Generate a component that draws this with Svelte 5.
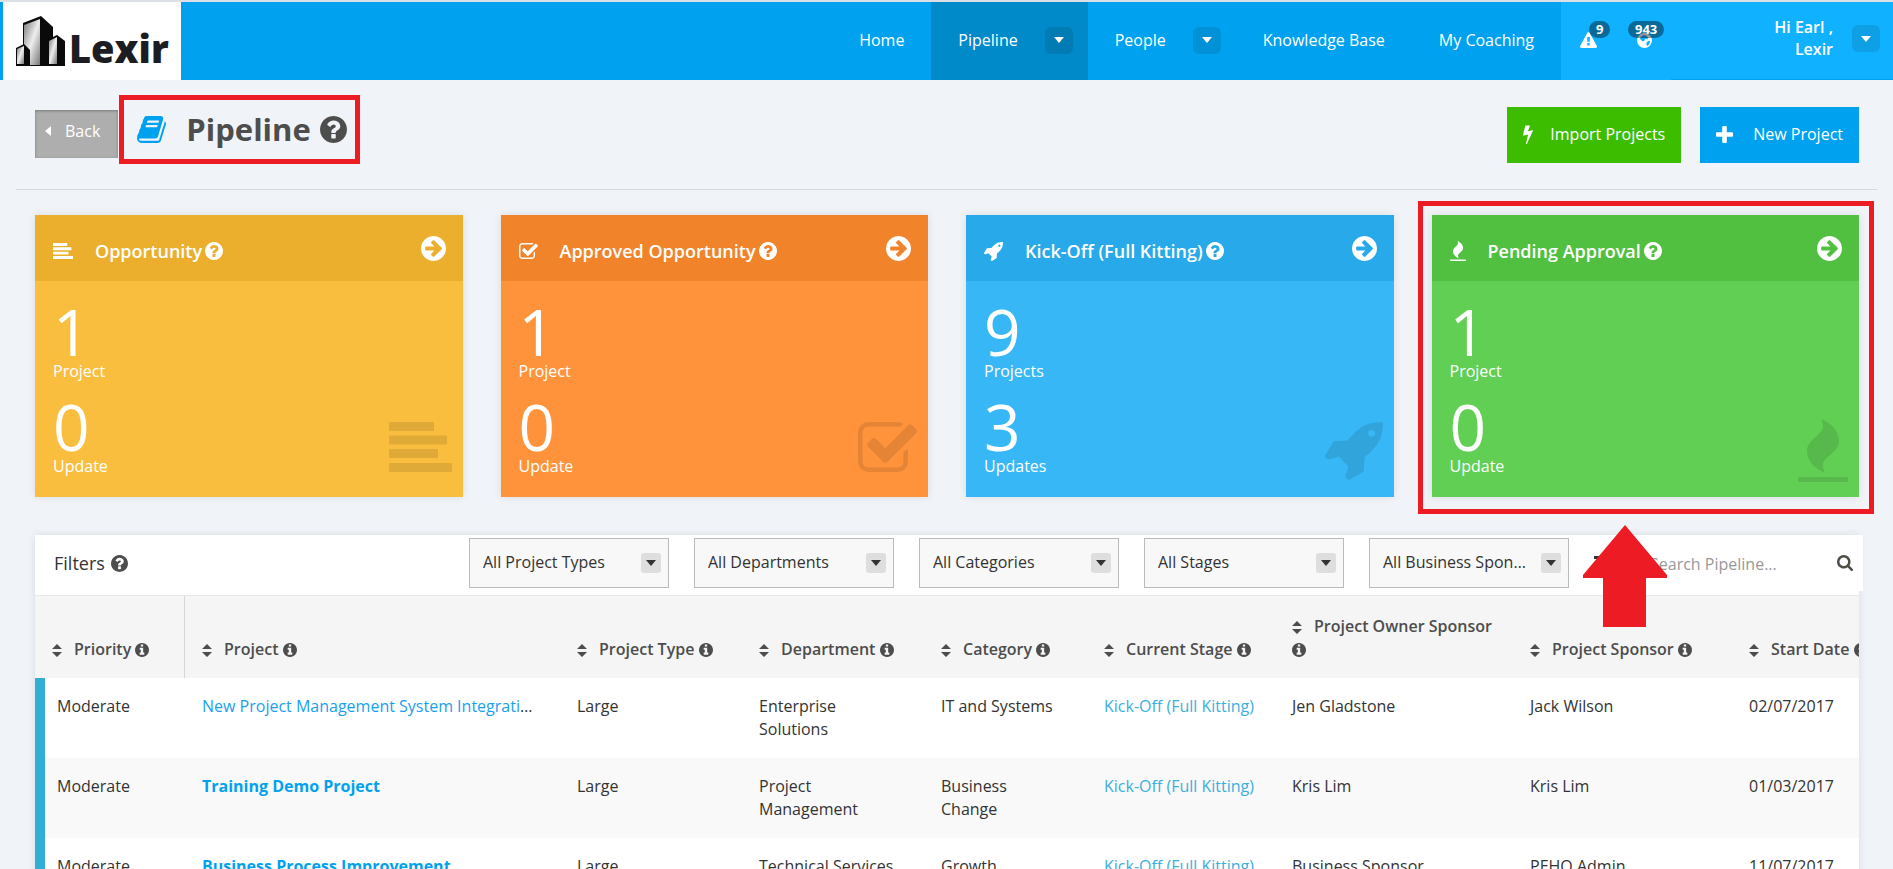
<script>
  const icons = {
    book: { w: 1664, h: 1536, box: '64 128 1664 1536', d: 'M1703 478q40 57 18 129l-275 906q-19 64-76.5 107.5t-122.5 43.5h-923q-77 0-148.5-53.5t-99.5-131.5q-24-67-2-127 0-4 3-27t4-37q1-8-3-21.5t-3-19.5q2-11 8-21t16.5-23.5 16.5-23.5q23-38 45-91.5t30-91.5q3-10 .5-30t-.5-28q3-11 17-28t17-23q21-36 42-92t25-90q1-9-2.5-32t.5-28q4-13 22-30.5t22-22.5q19-26 42.5-84.5t27.5-96.5q1-8-3-25.5t-2-26.5q2-8 9-18t18-23 17-21q8-12 16.5-30.5t15-35 16-36 19.5-32 26.5-23.5 36-11.5 47.5 5.5l-1 3q38-9 51-9h761q74 0 114 56t18 130l-274 906q-36 119-71.5 153.5t-128.5 34.5h-869q-27 0-38 15-11 16-1 43 24 70 144 70h923q29 0 56-15.5t35-41.5l300-987q7-22 5-57 38 15 59 43zm-1064 2q-4 13 2 22.5t20 9.5h608q13 0 25.5-9.5t16.5-22.5l21-64q4-13-2-22.5t-20-9.5h-608q-13 0-25.5 9.5t-16.5 22.5zm-83 256q-4 13 2 22.5t20 9.5h608q13 0 25.5-9.5t16.5-22.5l21-64q4-13-2-22.5t-20-9.5h-608q-13 0-25.5 9.5t-16.5 22.5z' },
    help: { w: 1536, h: 1536, box: '128 128 1536 1536', d: 'M1024 1376v-192q0-14-9-23t-23-9h-192q-14 0-23 9t-9 23v192q0 14 9 23t23 9h192q14 0 23-9t9-23zm256-672q0-88-55.5-163t-138.5-116-170-41q-243 0-371 213-15 24 8 42l132 100q7 6 19 6 16 0 25-12 53-68 86-92 34-24 86-24 48 0 85.5 26t37.5 59q0 38-20 61t-68 45q-63 28-115.5 86.5t-52.5 125.5v36q0 14 9 23t23 9h192q14 0 23-9t9-23q0-19 21.5-49.5t54.5-49.5q32-18 49-28.5t46-35 44.5-48 28-60.5 12.5-81zm384 192q0 209-103 385.5t-279.5 279.5-385.5 103-385.5-103-279.5-279.5-103-385.5 103-385.5 279.5-279.5 385.5-103 385.5 103 279.5 279.5 103 385.5z' },
    info: { w: 1536, h: 1536, box: '128 128 1536 1536', d: 'M1152 1376v-160q0-14-9-23t-23-9h-96v-512q0-14-9-23t-23-9h-320q-14 0-23 9t-9 23v160q0 14 9 23t23 9h96v320h-96q-14 0-23 9t-9 23v160q0 14 9 23t23 9h448q14 0 23-9t9-23zm-128-896v-160q0-14-9-23t-23-9h-192q-14 0-23 9t-9 23v160q0 14 9 23t23 9h192q14 0 23-9t9-23zm640 416q0 209-103 385.5t-279.5 279.5-385.5 103-385.5-103-279.5-279.5-103-385.5 103-385.5 279.5-279.5 385.5-103 385.5 103 279.5 279.5 103 385.5z' },
    go: { w: 1536, h: 1536, box: '128 128 1536 1536', d: 'M1413 896q0-27-18-45l-91-91-362-362q-18-18-45-18t-45 18l-91 91q-18 18-18 45t18 45l189 189h-502q-26 0-45 19t-19 45v128q0 26 19 45t45 19h502l-189 189q-19 19-19 45t19 45l91 91q18 18 45 18t45-18l362-362 91-91q18-18 18-45zm251 0q0 209-103 385.5t-279.5 279.5-385.5 103-385.5-103-279.5-279.5-103-385.5 103-385.5 279.5-279.5 385.5-103 385.5 103 279.5 279.5 103 385.5z' },
    check: { w: 1664, h: 1408, box: '64 128 1664 1408', d: 'M1472 930v318q0 119-84.5 203.5t-203.5 84.5h-832q-119 0-203.5-84.5t-84.5-203.5v-832q0-119 84.5-203.5t203.5-84.5h832q63 0 117 25 15 7 18 23 3 17-9 29l-49 49q-10 10-23 10-3 0-9-2-23-6-45-6h-832q-66 0-113 47t-47 113v832q0 66 47 113t113 47h832q66 0 113-47t47-113v-254q0-13 9-22l64-64q10-10 23-10 6 0 12 3 20 8 20 29zm231-489l-814 814q-24 24-57 24t-57-24l-430-430q-24-24-24-57t24-57l110-110q24-24 57-24t57 24l263 263 647-647q24-24 57-24t57 24l110 110q24 24 24 57t-24 57z' },
    rocket: { w: 1632, h: 1632, box: '32 128 1632 1632', d: 'M1440 448q0-40-28-68t-68-28-68 28-28 68 28 68 68 28 68-28 28-68zm224-288q0 249-75.5 430.5t-253.5 360.5q-81 80-195 176l-20 379q-2 16-16 26l-384 224q-7 4-16 4-12 0-23-9l-64-64q-13-14-8-32l85-276-281-281-276 85q-3 1-9 1-14 0-23-9l-64-64q-17-19-5-39l224-384q10-14 26-16l379-20q96-114 176-195 188-187 358-258t431-71q14 0 24 9.5t10 22.5z' },
    bars: { w: 63, h: 50, box: '0 0 63 50', d: 'M1 0h43q1 0 1 1v7q0 1-1 1h-43q-1 0-1-1v-7q0-1 1-1zM1 13.500h56q1 0 1 1v7q0 1-1 1h-56q-1 0-1-1v-7q0-1 1-1zM1 27h47q1 0 1 1v7q0 1-1 1h-47q-1 0-1-1v-7q0-1 1-1zM1 41h61q1 0 1 1v7q0 1-1 1h-61q-1 0-1-1v-7q0-1 1-1z' },
    flame: { w: 50, h: 60, box: '0 4 50 60', d: 'M23 1C33 5 41 13 41 23C41 35 25 38 25 47Q25 51 27 55C17 51 9 43 9 33C9 21 25 17 25 8Q25 4 23 1ZM1 59h48q1 0 1 1v3q0 1-1 1h-48q-1 0-1-1v-3q0-1 1-1z' },
    bolt: { w: 896, h: 1792, box: '448 0 896 1792', d: 'M1333 566q18 20 7 44l-540 1157q-13 25-42 25-4 0-14-2-17-5-25.500-19t-4.500-30l197-808-406 101q-4 1-12 1-18 0-31-11-18-15-13-39l201-825q4-14 16-23t28-9h328q19 0 32 12.500t13 29.500q0 8-5 18l-171 463 396-98q8-2 12-2 19 0 34 15z' },
    plus: { w: 1408, h: 1408, box: '192 128 1408 1408', d: 'M1600 736v192q0 40-28 68t-68 28h-416v416q0 40-28 68t-68 28h-192q-40 0-68-28t-28-68v-416h-416q-40 0-68-28t-28-68v-192q0-40 28-68t68-28h416v-416q0-40 28-68t68-28h192q40 0 68 28t28 68v416h416q40 0 68 28t28 68z' },
    search: { w: 1664, h: 1664, box: '64 128 1664 1664', d: 'M1216 832q0-185-131.500-316.500t-316.500-131.500-316.500 131.500-131.500 316.500 131.500 316.500 316.500 131.500 316.500-131.500 131.500-316.500zm512 832q0 52-38 90t-90 38q-54 0-90-38l-343-342q-179 124-399 124-143 0-273.500-55.500t-225-150-150-225-55.500-273.500 55.500-273.500 150-225 225-150 273.500-55.500 273.500 55.500 225 150 150 225 55.500 273.500q0 220-124 399l343 343q37 37 37 90z' },
    warning: { w: 1792, h: 1664, box: '0 0 1792 1664', d: 'M1024 1375v-190q0-14-9.500-23.500t-22.500-9.500h-192q-13 0-22.500 9.500t-9.500 23.500v190q0 14 9.500 23.500t22.500 9.500h192q13 0 22.500-9.500t9.500-23.500zm-2-374l18-459q0-12-10-19-13-11-24-11h-220q-11 0-24 11-10 7-10 21l17 457q0 10 10 16.500t24 6.500h185q14 0 23.500-6.500t10.500-16.500zm-14-934l768 1408q35 63-2 126-17 29-46.500 46t-63.500 17h-1536q-34 0-63.500-17t-46.500-46q-37-63-2-126l768-1408q17-31 47-49t65-18 65 18 47 49z' },
    globe: { w: 16, h: 16, box: '0 0 16 16', d: 'M8 0a8 8 0 1 0 0 16a8 8 0 1 0 0-16zM7 2l3 1 2 2-1 2-2-1-1 2-2 1-3-3 1-2zM10 10l3-2 1 1-1 3-2 2-1-2z' },
    caret: { w: 10, h: 6, box: '0 0 10 6', d: 'M0 0h10l-5 6z' },
    back: { w: 6, h: 10, box: '0 0 6 10', d: 'M6 0v10l-6-5z' },
    sort: { w: 10, h: 13, box: '0 0 10 13', d: 'M0 5L5 0L10 5ZM0 8H10L5 13Z' },
    list: { w: 16, h: 14, box: '0 0 16 14', d: 'M0 0h16v3h-16zM0 6h16v3h-16zM0 11h16v3h-16z' }
  };

  const nav = [
    { label: 'Home' },
    { label: 'Pipeline', menu: true, active: true },
    { label: 'People', menu: true },
    { label: 'Knowledge Base' },
    { label: 'My Coaching' }
  ];

  const cards = [
    { title: 'Opportunity', color: 'yellow', icon: 'bars', size: 20, big: 63, projects: 1, updates: 0 },
    { title: 'Approved Opportunity', color: 'orange', icon: 'check', size: 19, big: 59, projects: 1, updates: 0 },
    { title: 'Kick-Off (Full Kitting)', color: 'blue', icon: 'rocket', size: 19, big: 58, projects: 9, updates: 3 },
    { title: 'Pending Approval', color: 'green', icon: 'flame', size: 16, big: 50, projects: 1, updates: 0, marked: true }
  ];

  const filters = ['All Project Types', 'All Departments', 'All Categories', 'All Stages', 'All Business Sponsors'];

  const columns = [
    { label: 'Priority', width: 150 },
    { label: 'Project', width: 375 },
    { label: 'Project Type', width: 182 },
    { label: 'Department', width: 182 },
    { label: 'Category', width: 163 },
    { label: 'Current Stage', width: 188 },
    { label: 'Project Owner Sponsor', width: 238 },
    { label: 'Project Sponsor', width: 219 },
    { label: 'Start Date', width: 160 }
  ];

  const rows = [
    { priority: 'Moderate', project: 'New Project Management System Integration', type: 'Large', department: 'Enterprise Solutions', category: 'IT and Systems', stage: 'Kick-Off (Full Kitting)', owner: 'Jen Gladstone', sponsor: 'Jack Wilson', start: '02/07/2017' },
    { priority: 'Moderate', project: 'Training Demo Project', unread: true, type: 'Large', department: 'Project Management', category: 'Business Change', stage: 'Kick-Off (Full Kitting)', owner: 'Kris Lim', sponsor: 'Kris Lim', start: '01/03/2017' },
    { priority: 'Moderate', project: 'Business Process Improvement', unread: true, type: 'Large', department: 'Technical Services', category: 'Growth', stage: 'Kick-Off (Full Kitting)', owner: 'Business Sponsor', sponsor: 'PEHQ Admin', start: '11/07/2017' }
  ];

  let search = '';
</script>

{#snippet icon(name, width)}
  <svg
    class="icon"
    viewBox={icons[name].box}
    {width}
    height={Math.round((width * icons[name].h) / icons[name].w)}
    aria-hidden="true"
  >
    <path d={icons[name].d} />
  </svg>
{/snippet}

<div class="page">
  <header class="topbar">
    <a class="logo" href="#home" aria-label="Lexir home">
      <svg viewBox="0 0 50 51" width="50" height="51" aria-hidden="true">
        <defs>
          <linearGradient id="face" x1="0" y1="0" x2="1" y2="1">
            <stop offset="0" stop-color="#777" />
            <stop offset="0.5" stop-color="#eee" />
            <stop offset="1" stop-color="#777" />
          </linearGradient>
        </defs>
        <path d="M7 7L25 0L37 11V50H7Z" fill="#0a0a0a" />
        <path d="M8 9L24 3V49H8Z" fill="url(#face)" />
        <path d="M0 32L8 28L14 34V50H0Z" fill="#0a0a0a" />
        <path d="M1 33L8 30V48H1Z" fill="url(#face)" />
        <path d="M31 24L41 19L49 25V50H31Z" fill="#0a0a0a" />
        <path d="M33 25L41 21V48H33Z" fill="url(#face)" />
      </svg>
      <span>Lexir</span>
    </a>
    <nav>
      {#each nav as item}
        <div class="nav-item" class:active={item.active}>
          <a href="#{item.label}">{item.label}</a>
          {#if item.menu}
            <button class="toggle" aria-label="{item.label} menu">{@render icon('caret', 10)}</button>
          {/if}
        </div>
      {/each}
    </nav>
    <div class="alerts">
      <button class="alert" aria-label="Warnings">
        {@render icon('warning', 17)}
        <span class="badge">9</span>
      </button>
      <button class="alert" aria-label="Notifications">
        {@render icon('globe', 15)}
        <span class="badge wide">943</span>
      </button>
    </div>
    <div class="user">
      <p>Hi Earl ,<br />Lexir</p>
      <button class="toggle" aria-label="Account menu">{@render icon('caret', 10)}</button>
    </div>
  </header>

  <section class="heading">
    <button class="back">{@render icon('back', 6)}Back</button>
    <div class="title">
      {@render icon('book', 29)}
      <h1>Pipeline</h1>
      {@render icon('help', 27)}
    </div>
    <div class="actions">
      <button class="import">{@render icon('bolt', 10)}Import Projects</button>
      <button class="new">{@render icon('plus', 17)}New Project</button>
    </div>
  </section>
  <hr />

  <main>
    <section class="cards">
      {#each cards as card}
        <article class="card {card.color}">
          <header>
            {@render icon(card.icon, card.size)}
            <h2>{card.title}</h2>
            {@render icon('help', 18)}
            <a class="go" href="#{card.color}" aria-label="Open {card.title}">{@render icon('go', 25)}</a>
          </header>
          <div class="body">
            <div class="stat">
              <strong>{card.projects}</strong>
              <span>{card.projects === 1 ? 'Project' : 'Projects'}</span>
            </div>
            <div class="stat">
              <strong>{card.updates}</strong>
              <span>{card.updates > 1 ? 'Updates' : 'Update'}</span>
            </div>
            <div class="watermark">{@render icon(card.icon, card.big)}</div>
          </div>
          {#if card.marked}
            <div class="marker"></div>
            <svg class="arrow" viewBox="0 0 84 102" width="84" height="102" aria-hidden="true">
              <path d="M42 0L84 50V53H63V102H20V53H0V50Z" />
            </svg>
          {/if}
        </article>
      {/each}
    </section>

    <section class="panel">
      <div class="filters">
        <h3>Filters {@render icon('help', 17)}</h3>
        {#each filters as filter}
          <div class="select">
            <select aria-label={filter}>
              <option>{filter}</option>
            </select>
            <span class="select-caret">{@render icon('caret', 10)}</span>
          </div>
        {/each}
        <button class="list" aria-label="List options">{@render icon('list', 16)}</button>
        <form class="search" on:submit|preventDefault>
          <input type="text" bind:value={search} placeholder="Search Pipeline..." aria-label="Search Pipeline" />
          <button aria-label="Search">{@render icon('search', 16)}</button>
        </form>
      </div>

      <div class="table-wrap">
        <table>
          <colgroup>
            {#each columns as column}
              <col style="width: {column.width}px" />
            {/each}
          </colgroup>
          <thead>
            <tr>
              {#each columns as column}
                <th><span class="sort">{@render icon('sort', 10)}</span>{column.label} {@render icon('info', 14)}</th>
              {/each}
            </tr>
          </thead>
          <tbody>
            {#each rows as row}
              <tr>
                <td>{row.priority}</td>
                <td><div class="clip"><a href="#project" class:unread={row.unread}>{row.project}</a></div></td>
                <td>{row.type}</td>
                <td>{row.department}</td>
                <td>{row.category}</td>
                <td><a class="stage" href="#stage">{row.stage}</a></td>
                <td>{row.owner}</td>
                <td>{row.sponsor}</td>
                <td>{row.start}</td>
              </tr>
            {/each}
          </tbody>
        </table>
      </div>
    </section>
  </main>
</div>

<style>
  :global(body) {
    margin: 0;
    background: #f0f4f8;
  }

  .page {
    height: 100vh;
    overflow-x: hidden;
    overflow-y: auto;
    scrollbar-width: none;
    background: #f0f4f8;
    color: #333;
    font-family: 'Open Sans', 'Noto Sans', sans-serif;
    font-size: 16px;
    line-height: 23px;
  }

  h1, h2, h3, p {
    margin: 0;
  }

  a {
    text-decoration: none;
  }

  button {
    border: none;
    padding: 0;
    font: inherit;
    color: inherit;
    background: none;
    cursor: pointer;
  }

  .icon {
    flex: none;
    overflow: visible;
    fill: currentColor;
  }

  /* top bar */
  .topbar {
    display: flex;
    height: 78px;
    border-top: 2px solid #dcdfe6;
    background: #00a2ef;
    color: #fff;
  }

  .logo {
    display: flex;
    align-items: center;
    box-sizing: border-box;
    width: 178px;
    margin-left: 3px;
    padding-left: 13px;
    gap: 3px;
    background: #fff;
    color: #1c1d22;
    font-size: 38px;
    font-weight: 800;
  }

  .logo span {
    padding-top: 14px;
  }

  nav {
    display: flex;
    margin-left: auto;
  }

  .nav-item {
    display: flex;
    align-items: center;
    padding-bottom: 2px;
  }

  .nav-item.active {
    background: #008ac9;
  }

  .nav-item a {
    padding: 0 27px;
    color: #fff;
  }

  .toggle {
    width: 28px;
    height: 27px;
    border-radius: 6px;
    background: rgba(0, 0, 0, 0.1);
    line-height: 0;
  }

  .nav-item .toggle {
    margin-right: 15px;
  }

  .alerts {
    display: flex;
    align-items: center;
    box-sizing: border-box;
    width: 110px;
    padding: 0 0 2px 19px;
    gap: 40px;
    background: #10b1ff;
  }

  .alert {
    position: relative;
    line-height: 0;
  }

  .badge {
    position: absolute;
    left: 9px;
    bottom: 10px;
    padding: 0 7px;
    border-radius: 9px;
    background: rgba(0, 0, 0, 0.4);
    font-size: 13px;
    font-weight: 700;
    line-height: 17px;
  }

  .badge.wide {
    left: -9px;
  }

  .user {
    display: flex;
    align-items: center;
    justify-content: flex-end;
    box-sizing: border-box;
    width: 222px;
    padding: 0 13px 4px 0;
    gap: 19px;
    background: #10b1ff;
    border-bottom: 1px solid #00a2ef;
    font-weight: 600;
    line-height: 22px;
    text-align: right;
  }

  .user p {
    padding-bottom: 2px;
  }

  /* page heading */
  .heading {
    display: flex;
    align-items: flex-start;
    padding: 15px 34px 25px 35px;
  }

  .back {
    display: flex;
    align-items: center;
    height: 48px;
    margin: 15px 1px 0 0;
    padding: 0 18px 6px 10px;
    gap: 14px;
    background: #aeaeae;
    box-shadow: inset 0 1px 3px rgba(0, 0, 0, 0.3);
    color: #fff;
  }

  .title {
    display: flex;
    align-items: center;
    box-sizing: border-box;
    height: 69px;
    padding: 0 8px 0 13px;
    border: 5px solid #ed1c24;
    color: #4d4d4d;
  }

  .title .icon:first-child {
    margin-right: 20px;
    color: #00a2ef;
  }

  .title .icon:last-child {
    margin-left: 9px;
  }

  h1 {
    padding-bottom: 2px;
    font-size: 31px;
    font-weight: 700;
    line-height: 40px;
  }

  .actions {
    display: flex;
    margin: 12px 0 0 auto;
    gap: 19px;
  }

  .actions button {
    display: flex;
    align-items: center;
    height: 56px;
    padding: 0 16px 2px;
    color: #fff;
  }

  .import {
    gap: 17px;
    background: #3dbd00;
  }

  .new {
    gap: 20px;
    background: #00a2ef;
  }

  hr {
    margin: 0 16px;
    border: none;
    border-top: 1px solid #d3d9de;
  }

  main {
    padding: 25px 34px 0 35px;
  }

  /* stage cards */
  .cards {
    display: grid;
    grid-template-columns: repeat(4, 1fr);
    gap: 38px;
  }

  .card {
    position: relative;
    color: #fff;
    box-shadow: 0 0 8px rgba(0, 0, 0, 0.1);
  }

  .card header {
    display: flex;
    align-items: center;
    box-sizing: border-box;
    height: 66px;
    padding: 6px 17px 0 18px;
  }

  .card h2 {
    margin: 0 3px 0 22px;
    font-size: 18px;
    font-weight: 600;
  }

  .go {
    margin: 0 0 6px auto;
    color: #fff;
    line-height: 0;
  }

  .body {
    display: grid;
    gap: 16px;
    padding: 20px 18px 22px;
  }

  .stat {
    display: grid;
    line-height: 18px;
  }

  .stat strong {
    font-size: 64px;
    font-weight: 400;
    line-height: 61px;
  }

  .watermark {
    position: absolute;
    top: 207px;
    right: 11px;
    line-height: 0;
    color: rgba(0, 0, 0, 0.1);
  }

  .yellow { background: #fabe3f; }
  .yellow header { background: #ebaf2d; }
  .orange { background: #ff933c; }
  .orange header { background: #f1832a; }
  .blue { background: #37b7f5; }
  .blue header { background: #28a9e9; }
  .green { background: #61cf54; }
  .green header { background: #51c041; }

  .marker {
    position: absolute;
    inset: -14px -15px -17px -14px;
    border: 5px solid #ed1c24;
    pointer-events: none;
  }

  .arrow {
    position: absolute;
    top: calc(100% + 28px);
    left: 151px;
    z-index: 2;
    fill: #ed1c24;
  }

  /* project list */
  .panel {
    margin-top: 38px;
    background: #fff;
    box-shadow: 0 0 8px rgba(0, 0, 0, 0.1);
  }

  .filters {
    display: flex;
    align-items: center;
    height: 56px;
    margin-right: -4px;
    padding: 0 0 4px 19px;
  }

  h3 {
    margin-right: auto;
    font-size: 18px;
    font-weight: 500;
  }

  h3 .icon {
    margin-left: 1px;
    vertical-align: -2px;
    color: #4d4d4d;
  }

  .select {
    position: relative;
    margin-right: 25px;
  }

  select {
    display: block;
    width: 200px;
    height: 50px;
    padding: 0 36px 2px 13px;
    border: 1px solid #bbb;
    border-radius: 0;
    appearance: none;
    background: #f8f8f8;
    color: #333;
    font: inherit;
    text-overflow: ellipsis;
  }

  .select-caret {
    position: absolute;
    top: 15px;
    right: 8px;
    display: grid;
    place-items: center;
    width: 20px;
    height: 20px;
    border-radius: 3px;
    background: #dedede;
    pointer-events: none;
  }

  .list {
    color: #333;
    line-height: 0;
  }

  .search {
    display: flex;
    align-items: center;
    width: 253px;
    height: 56px;
    background: #fff;
  }

  .search input {
    flex: 1;
    min-width: 0;
    padding: 2px 0 0 40px;
    border: none;
    background: none;
    color: #333;
    font: inherit;
  }

  .search input::placeholder {
    color: #999;
  }

  .search button {
    margin-right: 10px;
    color: #4d4d45;
    line-height: 0;
  }

  .table-wrap {
    overflow: hidden;
    border-top: 1px solid #e8e8e8;
  }

  table {
    width: 100%;
    min-width: 1857px;
    table-layout: fixed;
    border-collapse: separate;
    border-spacing: 0;
  }

  th {
    padding: 19px 17px 17px;
    background: #f5f5f5;
    color: #4d4d4d;
    font-weight: 600;
    text-align: left;
    vertical-align: bottom;
  }

  th:first-child {
    border-right: 1px solid #d5d5d5;
  }

  th .icon {
    vertical-align: -2px;
  }

  .sort {
    margin-right: 12px;
  }

  td {
    height: 46px;
    padding: 17px 24px 17px 17px;
    vertical-align: top;
  }

  td:first-child {
    padding-left: 12px;
    border-left: 10px solid #30afd6;
  }

  tbody tr:nth-child(even) {
    background: #f9f9f9;
  }

  .clip {
    overflow: hidden;
    text-overflow: ellipsis;
    white-space: nowrap;
  }

  .clip a {
    color: #1a9ff0;
  }

  .clip .unread {
    color: #00a2ef;
    font-weight: 700;
  }

  .stage {
    color: #3dafdc;
    white-space: nowrap;
  }
</style>
